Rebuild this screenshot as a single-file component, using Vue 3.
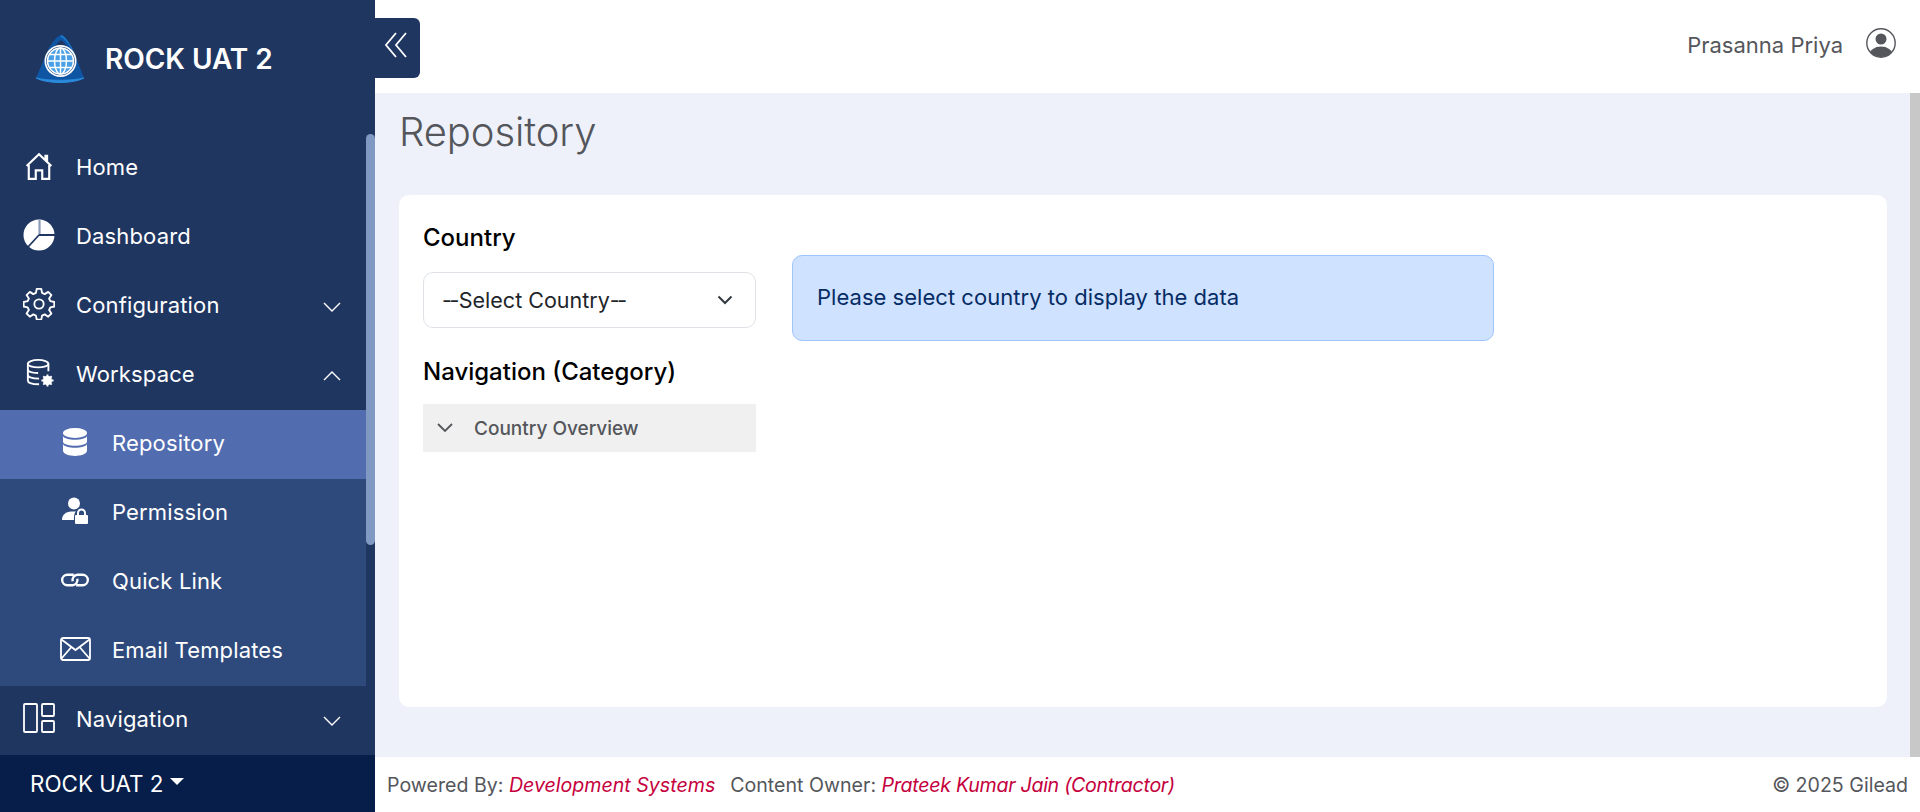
<script setup>
const menu = [
  { label: 'Home', icon: 'home' },
  { label: 'Dashboard', icon: 'pie' },
  { label: 'Configuration', icon: 'gear', caret: 'down' },
  { label: 'Workspace', icon: 'dbgear', caret: 'up' },
]
const sub = [
  { label: 'Repository', icon: 'db', active: true },
  { label: 'Permission', icon: 'lock' },
  { label: 'Quick Link', icon: 'link' },
  { label: 'Email Templates', icon: 'mail' },
]
</script>

<template>
  <div class="page">
    <aside class="side">
      <div class="brand">
        <svg class="logo" viewBox="0 0 50 50" width="50" height="50">
          <path d="M26 1 C30 2 34 8 38 16 L49 44 C40 49 10 49 1 44 L13 16 C17 8 22 2 26 1Z" fill="#0e55a4"/>
          <path d="M26 6 C23 8 20 12 18 15 C23 11 29 11 34 15 C32 12 29 8 26 6Z" fill="#1f3661"/>
          <path d="M26 1 C30 2 34 8 38 16 L42 26 C38 16 32 6 26 3Z" fill="#1c78cc"/>
          <path d="M1 44 C12 50 38 50 49 44 C38 47 12 47 1 44Z" fill="#2a8bdc" stroke="#2a8bdc"/>
          <circle cx="25.500" cy="27" r="16" fill="#fff"/>
          <circle cx="25.500" cy="27" r="14.300" fill="#123e7c"/>
          <circle cx="25.500" cy="27" r="13" fill="#4aa0e6"/>
          <g fill="none" stroke="#fff" stroke-width="1.500">
            <circle cx="25.500" cy="27" r="13"/>
            <ellipse cx="25.500" cy="27" rx="6" ry="13"/>
            <path d="M25.500 14V40M12.500 27H38.500M14.500 20.500H36.500M14.500 33.500H36.500"/>
          </g>
        </svg>
        <span class="brand-name">ROCK UAT 2</span>
      </div>
      <div class="scroller">
        <nav class="nav">
          <div v-for="m in menu" :key="m.label" class="row">
            <span class="ico">
              <svg v-if="m.icon === 'home'" viewBox="0 0 26 26" width="28" height="28" fill="none" stroke="#fff" stroke-width="2">
                <path d="M1.500 13 L13 2 L24.500 13 M19 7 V3.500 H20.500 V8.500 M3.500 12 V25 H10 V17 H16 V25 H22.500 V12"/>
              </svg>
              <svg v-else-if="m.icon === 'pie'" viewBox="0 0 32 32" width="32" height="32">
                <circle cx="16" cy="16" r="15.500" fill="#fff"/>
                <path d="M16.500 0 V16" stroke="#8c9cb9" stroke-width="2.200"/>
                <path d="M16 16 H32 M16 16 L5 28" fill="none" stroke="#1f3661" stroke-width="1.800"/>
              </svg>
              <svg v-else-if="m.icon === 'gear'" viewBox="0 0 24 24" width="32" height="32" fill="none" stroke="#fff" stroke-width="1.400" stroke-linejoin="round">
                <circle cx="12" cy="12" r="3.500"/>
                <path d="M10.300 1.500h3.400l.6 3 2 .9 2.600-1.700 2.400 2.400-1.700 2.600.9 2 3 .6v3.400l-3 .6-.9 2 1.700 2.600-2.400 2.400-2.600-1.700-2 .9-.6 3h-3.400l-.6-3-2-.9-2.600 1.700-2.400-2.400 1.700-2.600-.9-2-3-.6v-3.400l3-.6.9-2-1.700-2.600 2.400-2.400 2.600 1.700 2-.9z" transform="translate(0 -.8)"/>
              </svg>
              <svg v-else class="nudge" viewBox="0 0 30 30" width="28" height="28" fill="none" stroke="#fff" stroke-width="2">
                <ellipse cx="13" cy="5" rx="11" ry="4"/>
                <path d="M2 5 V23 C2 26 7 27 14 27 M24 5 V13 M2 11 C2 14 8 15 13 15 M2 17 C2 20 8 21 14 21"/>
                <circle cx="23" cy="23" r="5" fill="#fff" stroke="none"/>
                <path d="M23 16.500V29.500M16.500 23H29.500M18.500 18.500L27.500 27.500M27.500 18.500L18.500 27.500" stroke-width="2"/>
              </svg>
            </span>
            <span class="lbl">{{ m.label }}</span>
            <svg v-if="m.caret" class="caret" viewBox="0 0 18 10" width="18" height="10" fill="none" stroke="#fff" stroke-width="1.400">
              <path :d="m.caret === 'down' ? 'M1 1 L9 9 L17 1' : 'M1 9 L9 1 L17 9'"/>
            </svg>
          </div>
          <div class="subnav">
            <div v-for="s in sub" :key="s.label" class="row subrow" :class="{ active: s.active }">
              <span class="ico">
                <svg v-if="s.icon === 'db'" viewBox="0 0 24 28" width="24" height="28" fill="#fff">
                  <ellipse cx="12" cy="5" rx="12" ry="5"/>
                  <path d="M0 8 C2 13 22 13 24 8 V14 C22 19 2 19 0 14Z"/>
                  <path d="M0 16 C2 21 22 21 24 16 V23 C22 29.500 2 29.500 0 23Z"/>
                </svg>
                <svg v-else-if="s.icon === 'lock'" viewBox="0 0 26 27" width="26" height="27" fill="#fff">
                  <circle cx="12" cy="6.500" r="6"/>
                  <path d="M0 23 C0 18 4 14.500 9 14.500 H14 C12 16 12 20 12 23Z"/>
                  <path d="M14 18h11a1 1 0 0 1 1 1v7a1 1 0 0 1-1 1h-11a1 1 0 0 1-1-1v-7a1 1 0 0 1 1-1z"/>
                  <path d="M16 18 V16 A3.500 3.500 0 0 1 23 16 V18" fill="none" stroke="#fff" stroke-width="2"/>
                </svg>
                <svg v-else-if="s.icon === 'link'" viewBox="2 1 24 12" width="28" height="14" fill="none" stroke="#fff" stroke-width="2">
                  <path d="M13 2.500 H7.500 A4.500 4.500 0 0 0 7.500 11.500 H12 A4.500 4.500 0 0 0 16 6"/>
                  <path d="M15 11.500 H20.500 A4.500 4.500 0 0 0 20.500 2.500 H16 A4.500 4.500 0 0 0 12 8"/>
                </svg>
                <svg v-else viewBox="0 0 31 24" width="31" height="24" fill="none" stroke="#fff" stroke-width="1.800">
                  <rect x="1" y="1" width="29" height="22" rx="2"/>
                  <path d="M1.500 2.500 L15.500 13 L29.500 2.500 M1.500 21.500 L11 10.500 M29.500 21.500 L20 10.500"/>
                </svg>
              </span>
              <span class="lbl">{{ s.label }}</span>
            </div>
          </div>
          <div class="row">
            <span class="ico">
              <svg viewBox="0 0 32 30" width="32" height="30" fill="none" stroke="#fff" stroke-width="1.800">
                <rect x="1" y="1" width="13" height="28" rx="1"/>
                <rect x="19" y="1" width="12" height="12" rx="1"/>
                <rect x="19" y="18" width="12" height="11" rx="1"/>
              </svg>
            </span>
            <span class="lbl">Navigation</span>
            <svg class="caret" viewBox="0 0 18 10" width="18" height="10" fill="none" stroke="#fff" stroke-width="1.400">
              <path d="M1 1 L9 9 L17 1"/>
            </svg>
          </div>
        </nav>
        <div class="track"><div class="thumb"></div></div>
      </div>
      <div class="env">
        <span>ROCK UAT 2</span>
        <span class="env-caret"></span>
      </div>
    </aside>

    <div class="right">
      <header class="top">
        <button class="toggle" type="button" aria-label="Collapse">
          <svg viewBox="0 0 22 26" width="22" height="26" fill="none" stroke="#fff" stroke-width="1.800">
            <path d="M11 1 L1 13 L11 25 M21 1 L11 13 L21 25"/>
          </svg>
        </button>
        <span class="user">Prasanna Priya</span>
        <svg class="avatar" viewBox="0 0 30 30" width="30" height="30">
          <defs><clipPath id="avc"><circle cx="15" cy="15" r="14"/></clipPath></defs>
          <circle cx="15" cy="15" r="14.200" fill="none" stroke="#54565b" stroke-width="1.400"/>
          <circle cx="15" cy="11" r="5.500" fill="#54565b"/>
          <ellipse cx="15" cy="27" rx="11.500" ry="8.500" fill="#54565b" clip-path="url(#avc)"/>
        </svg>
      </header>

      <div class="body">
        <main class="content">
          <h1 class="title">Repository</h1>
          <section class="card">
            <div class="left-col">
              <div class="h">Country</div>
              <div class="select">
                <span><span class="dash">--</span>Select Country<span class="dash">--</span></span>
                <svg viewBox="0 0 16 10" width="16" height="10" fill="none" stroke="#343a40" stroke-width="2"><path d="M1.500 1.500 L8 8 L14.500 1.500"/></svg>
              </div>
              <div class="h h2">Navigation (Category)</div>
              <div class="tree">
                <svg viewBox="0 0 16 10" width="16" height="10" fill="none" stroke="#54565b" stroke-width="1.800"><path d="M1 1 L8 8 L15 1"/></svg>
                <span>Country Overview</span>
              </div>
            </div>
            <div class="alert">Please select country to display the data</div>
          </section>
        </main>
        <div class="vbar"></div>
      </div>

      <footer class="foot">
        <div>
          <span>Powered By: </span><em>Development Systems</em>
          <span class="gap">Content Owner: </span><em class="tight">Prateek Kumar Jain (Contractor)</em>
        </div>
        <div>© 2025 Gilead</div>
      </footer>
    </div>
  </div>
</template>

<style>
html, body { margin: 0; padding: 0; overflow: hidden; }
</style>

<style scoped>
.page {
  display: flex;
  width: 1920px;
  height: 812px;
  overflow: hidden;
  font-family: Inter, "Liberation Sans", sans-serif;
  background: #fff;
}
.side {
  width: 375px;
  flex: none;
  display: flex;
  flex-direction: column;
  background: #1f3661;
  color: #fff;
}
.brand {
  height: 134px;
  flex: none;
  box-sizing: border-box;
  padding: 34px 0 0 35px;
  display: flex;
  align-items: flex-start;
  gap: 20px;
}
.logo { flex: none; }
.brand-name {
  font-size: 28px;
  font-weight: 600;
  line-height: 50px;
  letter-spacing: -0.05px;
}
.scroller { flex: 1; display: flex; min-height: 0; }
.nav { flex: 1; min-width: 0; }
.track { width: 9px; flex: none; }
.thumb {
  height: 411px;
  background: #7f99c2;
  border-radius: 5px;
}
.row {
  height: 69px;
  display: flex;
  align-items: center;
  padding-left: 23px;
  padding-right: 25px;
}
.ico {
  width: 32px;
  flex: none;
  display: flex;
  justify-content: center;
  align-items: center;
  margin-right: 21px;
  margin-top: -6px;
}
.nudge { margin-left: 2px; }
.lbl { font-size: 22px; letter-spacing: 0.15px; flex: 1; margin-top: -4px; }
.caret { flex: none; }
.subnav { background: #2e4a7d; }
.subrow { padding-left: 59px; }
.active { background: #526cb0; }
.env {
  height: 57px;
  flex: none;
  background: #071d4a;
  display: flex;
  align-items: center;
  padding-left: 30px;
  font-size: 22.4px;
  gap: 7px;
}
.env-caret {
  width: 0;
  height: 0;
  border-left: 7px solid transparent;
  border-right: 7px solid transparent;
  border-top: 7px solid #fff;
  margin-top: -5px;
}
.right { flex: 1; min-width: 0; display: flex; flex-direction: column; }
.top {
  height: 93px;
  flex: none;
  position: relative;
  display: flex;
  align-items: center;
  justify-content: flex-end;
  padding-right: 24px;
  padding-bottom: 4px;
  box-sizing: border-box;
  color: #54565b;
}
.toggle {
  position: absolute;
  left: 0;
  top: 18px;
  width: 45px;
  height: 60px;
  padding: 0 4px 6px 0;
  border: 0;
  background: #1f3661;
  border-radius: 0 6px 6px 0;
  display: flex;
  align-items: center;
  justify-content: center;
}
.user { font-size: 22px; margin-right: 23px; }
.avatar { margin-top: -4px; }
.body { flex: 1; display: flex; background: #eef1f9; min-height: 0; }
.content { flex: 1; min-width: 0; padding: 0 23px 0 24px; }
.vbar { width: 10px; flex: none; background: #c8c8c8; }
.title {
  margin: 0;
  font-size: 40px;
  font-weight: 300;
  letter-spacing: -0.1px;
  line-height: 50px;
  padding-top: 14px;
  height: 102px;
  box-sizing: border-box;
  color: #54565b;
}
.card {
  height: 512px;
  box-sizing: border-box;
  background: #fff;
  border-radius: 10px;
  padding: 24px 24px;
  display: flex;
  align-items: flex-start;
  gap: 36px;
}
.left-col { width: 333px; flex: none; }
.h { font-size: 24px; font-weight: 500; color: #000; line-height: 38px; }
.h2 { margin-top: 25px; line-height: 38px; }
.select {
  margin-top: 15px;
  height: 56px;
  box-sizing: border-box;
  border: 1px solid #dee2e6;
  border-radius: 10px;
  display: flex;
  align-items: center;
  justify-content: space-between;
  padding: 0 22px 0 18px;
  font-size: 21.5px;
  color: #212529;
}
.dash { letter-spacing: -2.5px; margin-right: 2px; }
.tree {
  margin-top: 13px;
  height: 48px;
  background: #f0f0f0;
  display: flex;
  align-items: center;
  gap: 21px;
  padding-left: 14px;
  font-size: 19px;
  font-weight: 500;
  color: #54565b;
}
.alert {
  margin-top: 36px;
  width: 702px;
  height: 86px;
  box-sizing: border-box;
  background: #cfe2ff;
  border: 1px solid #9ec5fe;
  border-radius: 10px;
  display: flex;
  align-items: center;
  padding-left: 24px;
  padding-bottom: 2px;
  font-size: 22px;
  letter-spacing: 0.03px;
  color: #052c65;
}
.foot {
  height: 55px;
  flex: none;
  display: flex;
  justify-content: space-between;
  align-items: center;
  padding: 0 12px;
  box-sizing: border-box;
  font-size: 19.6px;
  color: #54565b;
}
.foot em { color: #c5003d; font-style: italic; }
.foot .tight { letter-spacing: -0.28px; }
.gap { margin-left: 15px; }
</style>
